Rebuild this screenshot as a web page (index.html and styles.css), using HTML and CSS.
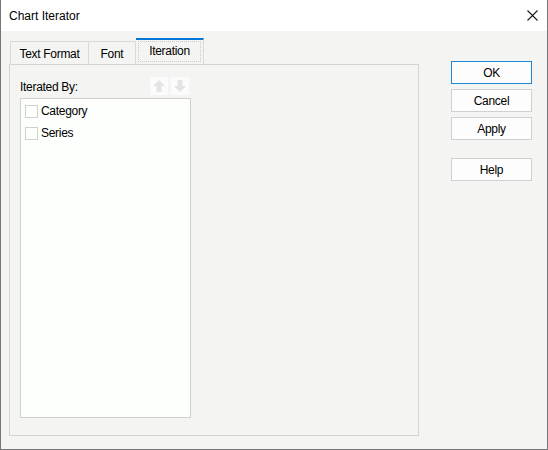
FILE: index.html
```html
<!DOCTYPE html>
<html>
<head>
<meta charset="utf-8">
<title>Chart Iterator</title>
<link rel="stylesheet" href="styles.css">
</head>
<body>
<div class="window">
  <div class="titlebar">
    <span class="title">Chart Iterator</span>
    <svg class="close" width="11" height="11" viewBox="0 0 11 11"><path d="M0.5 0.5 L10.5 10.5 M10.5 0.5 L0.5 10.5" stroke="#1a1a1a" stroke-width="1.1" fill="none"/></svg>
  </div>
  <div class="content">
    <div class="left">
      <div class="tabs">
        <div class="tab tab-text">Text Format</div>
        <div class="tab tab-font">Font</div>
        <div class="tab tab-sel"><span class="focus">Iteration</span></div>
      </div>
      <div class="panel">
        <div class="panel-head">
          <span class="label">Iterated By:</span>
          <div class="arrows">
            <div class="arrow-btn">
              <svg width="14" height="14" viewBox="0 0 14 14"><path d="M7 1 L13 7 L9.5 7 L9.5 13 L4.5 13 L4.5 7 L1 7 Z" fill="#e4e4e4"/></svg>
            </div>
            <div class="arrow-btn">
              <svg width="14" height="14" viewBox="0 0 14 14"><path d="M7 13 L13 7 L9.5 7 L9.5 1 L4.5 1 L4.5 7 L1 7 Z" fill="#e4e4e4"/></svg>
            </div>
          </div>
        </div>
        <div class="list">
          <div class="item"><span class="check"></span><span>Category</span></div>
          <div class="item"><span class="check"></span><span>Series</span></div>
        </div>
      </div>
    </div>
    <div class="buttons">
      <div class="btn btn-ok">OK</div>
      <div class="btn">Cancel</div>
      <div class="btn">Apply</div>
      <div class="btn btn-help">Help</div>
    </div>
  </div>
</div>
</body>
</html>
```
FILE: styles.css
```css
html, body {
  margin: 0;
  padding: 0;
}
body {
  font-family: "Liberation Sans", Arial, sans-serif;
  font-size: 12px;
  letter-spacing: -0.3px;
  color: #000;
  background: #f4f5f3;
}
.window {
  width: 548px;
  height: 450px;
  box-sizing: border-box;
  border: 1px solid #777;
  border-top: none;
  background: #f4f5f3;
  display: flex;
  flex-direction: column;
}
.titlebar {
  height: 31px;
  background: #ffffff;
  display: flex;
  align-items: center;
  justify-content: space-between;
  padding: 0 9px 0 8px;
  flex-shrink: 0;
}
.title {
  font-size: 12px;
  letter-spacing: 0;
  padding-top: 1px;
}
.close {
  display: block;
  margin-top: -1px;
}
.content {
  display: flex;
  padding: 8px 0 0 8px;
  gap: 32px;
}
.left {
  width: 410px;
  display: flex;
  flex-direction: column;
}
.tabs {
  display: flex;
  align-items: flex-end;
  padding-left: 1px;
  height: 26px;
  margin-bottom: -1px;
}
.tab {
  height: 24px;
  box-sizing: border-box;
  border: 1px solid #d9d9d9;
  border-bottom: none;
  display: flex;
  align-items: center;
  justify-content: center;
  background: #f4f5f3;
  padding-top: 1px;
}
.tab-text {
  width: 79px;
}
.tab-font {
  width: 47px;
  border-left: none;
}
.tab-sel {
  width: 68px;
  height: 27px;
  border-top: 2px solid #0078d7;
  border-left: none;
  background: #f4f5f3;
  padding: 1px 2px 3px 2px;
  align-items: stretch;
}
.focus {
  flex: 1;
  border: 1px dotted #c9c9c9;
  display: flex;
  align-items: center;
  justify-content: center;
  padding-bottom: 1px;
}
.panel {
  height: 372px;
  box-sizing: border-box;
  border: 1px solid #d4d4d4;
  padding: 11px 0 0 10px;
}
.panel-head {
  width: 170px;
  display: flex;
  justify-content: space-between;
  align-items: center;
  height: 19px;
  margin-bottom: 3px;
}
.label {
  padding-top: 3px;
}
.arrows {
  display: flex;
  gap: 3px;
  padding-right: 1px;
}
.arrow-btn {
  width: 18px;
  height: 18px;
  background: #fbfbfb;
  display: flex;
  align-items: center;
  justify-content: center;
}
.arrow-btn svg {
  display: block;
}
.list {
  width: 171px;
  height: 320px;
  box-sizing: border-box;
  border: 1px solid #d0d0d0;
  background: #fcfffc;
  padding: 1px 0 0 4px;
}
.item {
  display: flex;
  align-items: center;
  height: 22px;
  gap: 3px;
}
.check {
  width: 13px;
  height: 13px;
  box-sizing: border-box;
  border: 1px solid #d0d0d0;
  background: #fcfffc;
}
.buttons {
  display: flex;
  flex-direction: column;
  padding-top: 22px;
  gap: 5px;
}
.btn {
  width: 81px;
  height: 23px;
  box-sizing: border-box;
  border: 1px solid #d0d0d0;
  background: #fdfdfd;
  display: flex;
  align-items: center;
  justify-content: center;
}
.btn-ok {
  border-color: #1a8ad6;
}
.btn-help {
  margin-top: 13px;
}
```
